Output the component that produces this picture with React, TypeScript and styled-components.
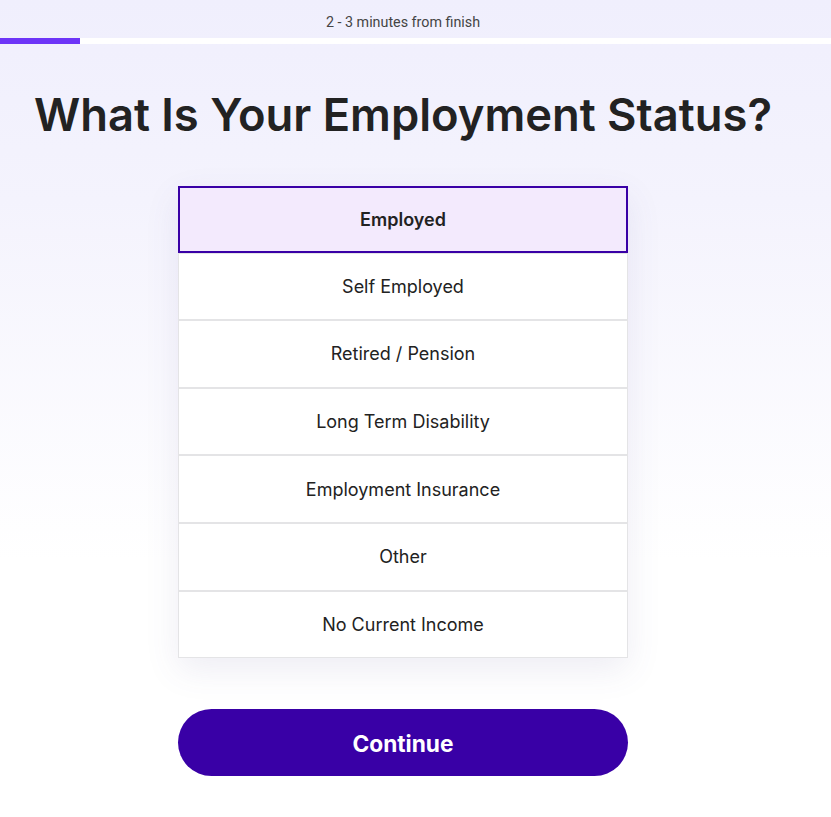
import React, { useState } from "react";
import styled, { createGlobalStyle } from "styled-components";

const GlobalStyle = createGlobalStyle`
  html, body { margin: 0; padding: 0; }
  body {
    font-family: Inter, "Noto Sans", sans-serif;
    background: #ffffff;
    color: #222;
  }
`;

const Page = styled.div`
  min-height: 817px;
  background: linear-gradient(180deg, #f0effd 0px, #f4f3fd 200px, #ffffff 560px);
`;

const Header = styled.header`
  width: 806px;
  height: 38px;
  display: flex;
  align-items: center;
  justify-content: center;
  font-family: Roboto, "Liberation Sans", sans-serif;
  font-size: 14.3px;
  color: #444;
  padding-top: 6px;
  box-sizing: border-box;
`;

const Track = styled.div`
  height: 6px;
  background: #ffffff;
  width: 100%;
`;

const Fill = styled.div`
  height: 100%;
  background: #6d34f7;
`;

const Content = styled.main`
  width: 806px;
  display: flex;
  flex-direction: column;
  align-items: center;
`;

const Title = styled.h1`
  margin: 42px 0 0;
  font-family: Inter, sans-serif;
  font-weight: 600;
  font-size: 45.3px;
  line-height: 57px;
  color: #222;
  letter-spacing: 0;
`;

const List = styled.div`
  margin-top: 43px;
  width: 450px;
  display: flex;
  flex-direction: column;
  box-shadow: 0 12px 32px rgba(90, 80, 150, 0.1);
`;

const Option = styled.button<{ $selected: boolean }>`
  box-sizing: border-box;
  height: ${(p) => (p.$selected ? "66.5px" : "67.67px")};
  width: 100%;
  display: flex;
  align-items: center;
  justify-content: center;
  font-family: Inter, sans-serif;
  font-size: 18px;
  font-weight: ${(p) => (p.$selected ? 600 : 400)};
  color: #222;
  background: ${(p) => (p.$selected ? "#f3eafd" : "#ffffff")};
  border: ${(p) => (p.$selected ? "2px solid #3900a6" : "1px solid #e4e4e6")};
  margin: 0;
  padding: 0;
  cursor: pointer;
`;

const ContinueButton = styled.button`
  margin-top: 51px;
  width: 450px;
  height: 67px;
  border: none;
  border-radius: 34px;
  background: #3900a6;
  color: #ffffff;
  font-family: Inter, sans-serif;
  font-weight: 700;
  font-size: 22.7px;
  padding-top: 2px;
  cursor: pointer;
`;

const options = [
  "Employed",
  "Self Employed",
  "Retired / Pension",
  "Long Term Disability",
  "Employment Insurance",
  "Other",
  "No Current Income",
];

export default function App() {
  const [selected, setSelected] = useState("Employed");
  return (
    <>
      <GlobalStyle />
      <Page>
        <Header>2 - 3 minutes from finish</Header>
        <Track>
          <Fill style={{ width: "80px" }} />
        </Track>
        <Content>
          <Title>What Is Your Employment Status?</Title>
          <List>
            {options.map((o) => (
              <Option key={o} $selected={selected === o} onClick={() => setSelected(o)}>
                {o}
              </Option>
            ))}
          </List>
          <ContinueButton>Continue</ContinueButton>
        </Content>
      </Page>
    </>
  );
}
